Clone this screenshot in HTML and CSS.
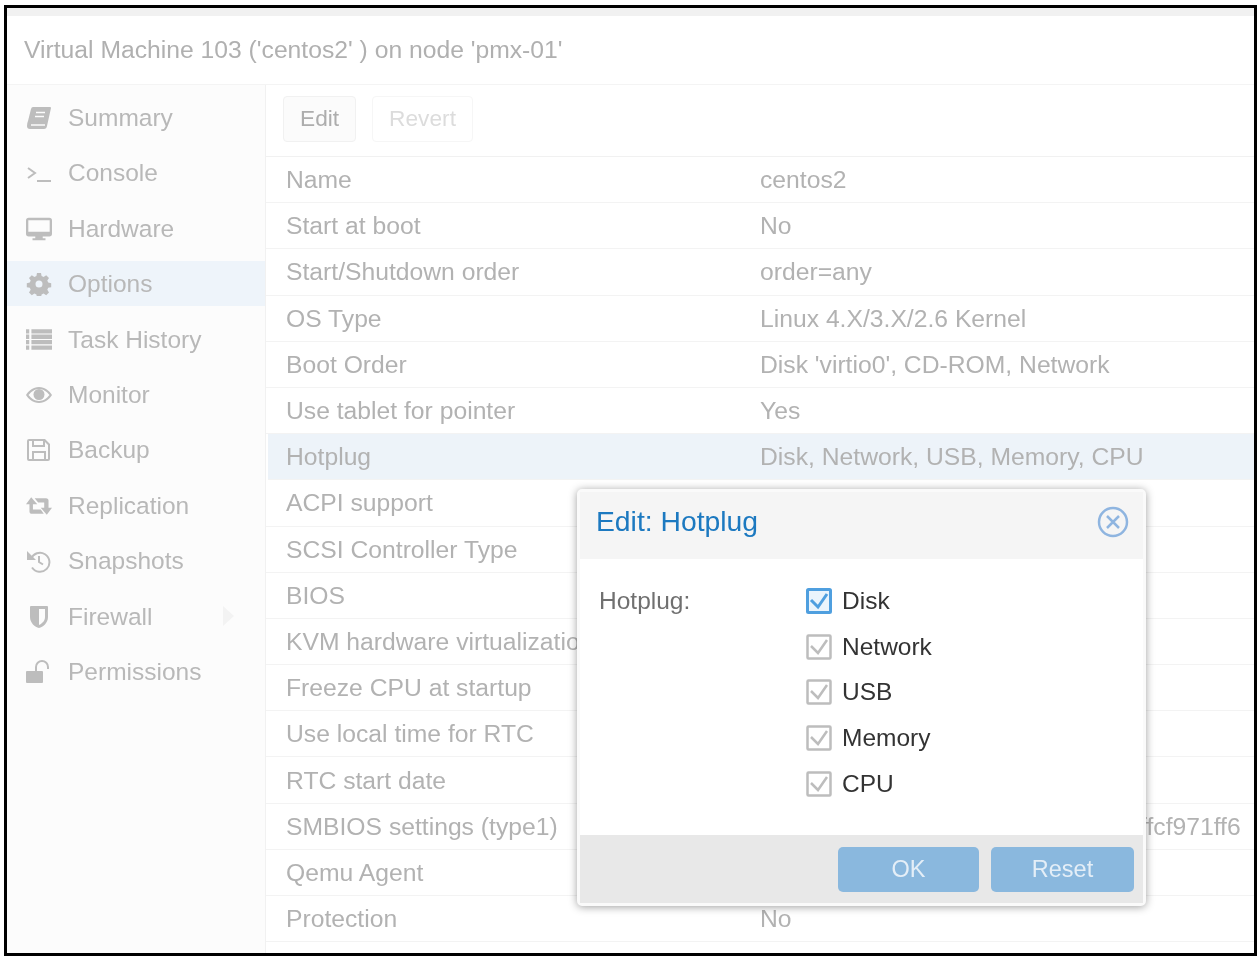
FILE: index.html
```html
<!DOCTYPE html>
<html lang="en">

<head>
    <meta charset="UTF-8">
    <title>Virtual Machine 103</title>
    <link rel="stylesheet" href="styles.css">
</head>

<body>
    <div class="frame">
        <div class="strip"></div>
        <div class="title">Virtual Machine 103 ('centos2' ) on node 'pmx-01'</div>
        <div class="main">
            <ul class="side">
                <li><svg viewBox="0 0 24 24"><path d="M6 1h17q1 0 1 1l-4 18q-.5 3-3 3H3q-3 0-3-3t1-5L4 3q.5-2 2-2z"/><path d="M9 6.500h9M8 10.500h9M4 19h14" stroke="#fcfcfc" stroke-width="1.500"/></svg>Summary</li>
                <li><svg viewBox="0 0 24 24"><path class="line" d="M1 7l7 5-7 5M10 20h14"/></svg>Console</li>
                <li><svg viewBox="0 0 28 24"><path d="M3 0h22q3 0 3 3v14q0 3-3 3h-7v2h3v2H7v-2h3v-2H3q-3 0-3-3V3q0-3 3-3zm-.500 2.500v12.500h23V2.500z"/></svg>Hardware</li>
                <li class="on"><svg viewBox="0 0 24 24"><path fill-rule="evenodd" d="M10 1h4l.6 3 2 .9 2.600-1.700 2.800 2.800-1.700 2.600.9 2 3 .6v4l-3 .6-.9 2 1.700 2.600-2.800 2.800-2.600-1.700-2 .9-.6 3h-4l-.6-3-2-.9-2.600 1.700-2.800-2.800 1.700-2.600-.9-2-3-.6v-4l3-.6.9-2-1.700-2.600 2.800-2.800 2.600 1.700 2-.9zM12 8.500a3.500 3.500 0 1 0 0 7 3.500 3.500 0 0 0 0-7z"/></svg>Options</li>
                <li><svg viewBox="0 0 24 22"><path d="M0 1h3v4H0zM5 1h19v4H5zM0 6h3v4H0zM5 6h19v4H5zM0 11h3v4H0zM5 11h19v4H5zM0 16h3v4H0zM5 16h19v4H5z"/></svg>Task History</li>
                <li><svg viewBox="0 0 26 24"><path fill-rule="evenodd" d="M13 4c6 0 10.500 4 13 8-2.500 4-7 8-13 8S2.500 16 0 12c2.500-4 7-8 13-8zm0 2c-4.500 0-8 3-10.500 6 2.500 3 6 6 10.500 6s8-3 10.500-6C21 9 17.500 6 13 6z"/><circle cx="13" cy="11.500" r="5.500"/></svg>Monitor</li>
                <li><svg viewBox="0 0 24 24"><path fill-rule="evenodd" d="M2 1h16l5 5v15q0 2-2 2H2q-2 0-2-2V3q0-2 2-2zm0 2v18h3v-8h14v8h2V7l-3-3v5H5V3zm5 0v4h9V3zm0 12v6h10v-6z"/></svg>Backup</li>
                <li><svg viewBox="0 0 30 24"><path d="M6 2l7 8H8v6h9l3.500 5H7q-3 0-3-3v-8H0zM10 3h13q3 0 3 3v8h4l-6 8-7-8h4V8h-7z"/></svg>Replication</li>
                <li><svg viewBox="0 0 24 24"><path class="line" stroke-width="3.500" d="M4 10a9.500 9.500 0 1 1 1 8.500M12 7v6l4 2.500"/><path d="M0 2l9 9H0z"/></svg>Snapshots</li>
                <li class="fw"><svg viewBox="0 0 24 24"><path fill-rule="evenodd" d="M4 1h16q1 0 1 1v10c0 6-5 10-9 11-4-1-9-5-9-11V2q0-1 1-1zm8 3v16c3-1.500 6-4 6-8V4z"/></svg>Firewall<span class="arrow"></span></li>
                <li><svg viewBox="0 0 26 24"><path d="M1 11h15q1 0 1 1v10q0 1-1 1H1q-1 0-1-1V12q0-1 1-1z"/><path class="line" stroke-width="3.500" d="M10 11V7a6 6 0 0 1 12 0v2"/></svg>Permissions</li>
            </ul>
            <div class="content">
                <div class="toolbar">
                    <button class="tbtn">Edit</button>
                    <button class="tbtn off">Revert</button>
                </div>
                <div class="row"><span>Name</span><span>centos2</span></div>
                <div class="row"><span>Start at boot</span><span>No</span></div>
                <div class="row"><span>Start/Shutdown order</span><span>order=any</span></div>
                <div class="row"><span>OS Type</span><span>Linux 4.X/3.X/2.6 Kernel</span></div>
                <div class="row"><span>Boot Order</span><span>Disk 'virtio0', CD-ROM, Network</span></div>
                <div class="row"><span>Use tablet for pointer</span><span>Yes</span></div>
                <div class="row sel"><span>Hotplug</span><span>Disk, Network, USB, Memory, CPU</span></div>
                <div class="row"><span>ACPI support</span></div>
                <div class="row"><span>SCSI Controller Type</span></div>
                <div class="row"><span>BIOS</span></div>
                <div class="row"><span>KVM hardware virtualization</span></div>
                <div class="row"><span>Freeze CPU at startup</span></div>
                <div class="row"><span>Use local time for RTC</span></div>
                <div class="row"><span>RTC start date</span></div>
                <div class="row"><span>SMBIOS settings (type1)</span><span>uuid=2b6e1d40-7c3a-4e19-a8d2-ffffcf971ff6</span></div>
                <div class="row"><span>Qemu Agent</span></div>
                <div class="row"><span>Protection</span><span>No</span></div>
            </div>
        </div>

        <div class="modal">
            <div class="modal-head">
                <span class="modal-title">Edit: Hotplug</span>
                <svg class="close" viewBox="0 0 32 32"><circle cx="16" cy="16" r="14"/><path d="M10 10l12 12M22 10L10 22"/></svg>
            </div>
            <div class="modal-body">
                <div class="field">Hotplug:</div>
                <div class="checks">
                    <div class="check focus"><svg viewBox="0 0 26 26"><rect x="1.500" y="1.500" width="23" height="23" rx="1"/><path d="M5 12l7 7 9-13"/></svg>Disk</div>
                    <div class="check"><svg viewBox="0 0 26 26"><rect x="1.500" y="1.500" width="23" height="23" rx="1"/><path d="M5 12l7 7 9-13"/></svg>Network</div>
                    <div class="check"><svg viewBox="0 0 26 26"><rect x="1.500" y="1.500" width="23" height="23" rx="1"/><path d="M5 12l7 7 9-13"/></svg>USB</div>
                    <div class="check"><svg viewBox="0 0 26 26"><rect x="1.500" y="1.500" width="23" height="23" rx="1"/><path d="M5 12l7 7 9-13"/></svg>Memory</div>
                    <div class="check"><svg viewBox="0 0 26 26"><rect x="1.500" y="1.500" width="23" height="23" rx="1"/><path d="M5 12l7 7 9-13"/></svg>CPU</div>
                </div>
            </div>
            <div class="modal-foot">
                <button class="mbtn ok">OK</button>
                <button class="mbtn reset">Reset</button>
            </div>
        </div>
    </div>
</body>

</html>
```

FILE: styles.css
```css
* {
    margin: 0;
    padding: 0;
    list-style: none;
    box-sizing: border-box;
}

html,
body {
    height: 100%;
    background: #fff;
}

body {
    padding: 5px 2px 2px 4px;
    font-family: "Liberation Sans", Arial, sans-serif;
    overflow: hidden;
}

/* the reference is a scaled-up capture, so everything is a little soft */
.frame {
    position: relative;
    width: 1253px;
    height: 951px;
    border: 3px solid #000;
    display: flex;
    flex-direction: column;
    overflow: hidden;
    background: #fff;
    filter: blur(.4px);
}

.strip {
    height: 8px;
    background: #f1f1f1;
}

.title {
    height: 69px;
    line-height: 68px;
    padding-left: 17px;
    font-size: 24.700px;
    color: #b0b0b0;
    border-bottom: 1px solid #f4f4f4;
}

.main {
    flex: 1;
    display: flex;
    min-height: 0;
}

/* left menu */
.side {
    width: 259px;
    flex: none;
    padding-top: 10px;
    background: #fcfcfc;
    border-right: 1px solid #f1f1f1;
}

.side li {
    height: 45px;
    margin-bottom: 10.400px;
    padding-top: 1px;
    display: flex;
    align-items: center;
    font-size: 24.500px;
    color: #b8b8b8;
    position: relative;
}

.side li svg {
    width: 26px;
    height: 24px;
    margin: 0 16px 0 19px;
    fill: #bdbdbd;
    flex: none;
}

.side .on {
    background: #eef4fa;
}

.line {
    fill: none !important;
    stroke: #bdbdbd;
    stroke-width: 2;
}

.arrow {
    position: absolute;
    left: 216px;
    top: 12px;
    border-left: 11px solid #f3f3f3;
    border-top: 10px solid transparent;
    border-bottom: 10px solid transparent;
}

/* options grid */
.content {
    flex: 1;
    min-width: 0;
    overflow: hidden;
}

.toolbar {
    height: 72px;
    display: flex;
    align-items: center;
    gap: 16px;
    padding: 0 0 4px 17px;
    border-bottom: 1px solid #f1f1f1;
}

.tbtn {
    height: 46px;
    padding: 0 16px;
    font: 22.700px "Liberation Sans", Arial, sans-serif;
    color: #adadad;
    background: #fbfbfb;
    border: 1px solid #f1f1f1;
    border-radius: 4px;
}

.tbtn.off {
    color: #dcdcdc;
    background: #fff;
    border-color: #f6f6f6;
}

.row {
    height: 46.200px;
    display: grid;
    grid-template-columns: 474px 1fr;
    align-items: center;
    padding: 1px 0 0 20px;
    font-size: 24.700px;
    color: #b2b2b2;
    white-space: nowrap;
    border-bottom: 1px solid #f3f3f3;
}

.row.sel {
    background: #edf3f9;
    margin-left: 2px;
    padding-left: 18px;
}

/* dialog */
.modal {
    position: absolute;
    left: 570px;
    top: 481px;
    width: 569px;
    height: 417px;
    display: flex;
    flex-direction: column;
    background: #fff;
    border: 3px solid #fafafa;
    border-radius: 5px;
    box-shadow: 0 1px 9px rgba(0, 0, 0, .38);
}

.modal-head {
    height: 67px;
    flex: none;
    display: flex;
    align-items: center;
    justify-content: space-between;
    padding: 0 14px 8px 16px;
    background: #f5f5f5;
}

.modal-title {
    font-size: 28.300px;
    color: #1c79c0;
}

.close {
    width: 32px;
    height: 32px;
    fill: none;
    stroke: #8fb5e0;
    stroke-width: 2.500;
}

.modal-body {
    flex: 1;
    display: flex;
    padding: 19px 0 0 19px;
    font-size: 24.500px;
}

.field {
    width: 207px;
    line-height: 45px;
    color: #707070;
}

.checks {
    display: flex;
    flex-direction: column;
}

.check {
    height: 45.700px;
    display: flex;
    align-items: center;
    gap: 10px;
    color: #333;
}

.check svg {
    width: 26px;
    height: 26px;
    fill: none;
    stroke: #bdbdbd;
    stroke-width: 2.500;
}

.check.focus svg {
    stroke: #4f9fdf;
    stroke-width: 3;
}

.check.focus svg rect {
    fill: #eaf4fc;
}

.modal-foot {
    height: 68px;
    flex: none;
    display: flex;
    align-items: center;
    justify-content: flex-end;
    gap: 12px;
    padding: 0 9px 0 0;
    background: #e8e8e8;
}

.mbtn {
    height: 45px;
    font: 23.500px "Liberation Sans", Arial, sans-serif;
    color: #e4eef7;
    background: #8ab8de;
    border: 0;
    border-radius: 5px;
}

.ok {
    width: 141px;
}

.reset {
    width: 143px;
}
```
